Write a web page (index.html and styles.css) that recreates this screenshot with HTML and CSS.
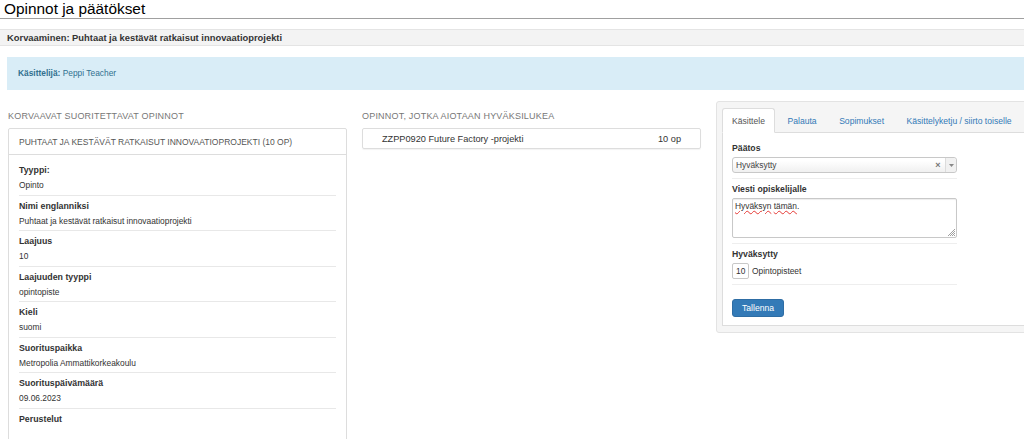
FILE: index.html
```html
<!DOCTYPE html>
<html lang="fi">
<head>
<meta charset="utf-8">
<title>Opinnot ja päätökset</title>
<link rel="stylesheet" href="styles.css">
</head>
<body>
<h1 class="page-title">Opinnot ja päätökset</h1>
<div class="subbar">Korvaaminen: Puhtaat ja kestävät ratkaisut innovaatioprojekti</div>
<div class="info"><b>Käsittelijä:</b> Peppi Teacher</div>

<div class="columns">
  <section class="col">
    <h2 class="section-title">Korvaavat suoritettavat opinnot</h2>
    <div class="card">
      <div class="card-head">PUHTAAT JA KESTÄVÄT RATKAISUT INNOVAATIOPROJEKTI (10 OP)</div>
      <div class="card-body">
        <div class="row"><div class="lbl">Tyyppi:</div><div class="val">Opinto</div></div>
        <div class="row"><div class="lbl">Nimi englanniksi</div><div class="val">Puhtaat ja kestävät ratkaisut innovaatioprojekti</div></div>
        <div class="row"><div class="lbl">Laajuus</div><div class="val">10</div></div>
        <div class="row"><div class="lbl">Laajuuden tyyppi</div><div class="val">opintopiste</div></div>
        <div class="row"><div class="lbl">Kieli</div><div class="val">suomi</div></div>
        <div class="row"><div class="lbl">Suorituspaikka</div><div class="val">Metropolia Ammattikorkeakoulu</div></div>
        <div class="row"><div class="lbl">Suorituspäivämäärä</div><div class="val">09.06.2023</div></div>
        <div class="row last"><div class="lbl">Perustelut</div><div class="val empty"></div></div>
      </div>
    </div>
  </section>

  <section class="col">
    <h2 class="section-title">Opinnot, jotka aiotaan hyväksilukea</h2>
    <div class="study">
      <span>ZZPP0920 Future Factory -projekti</span>
      <span>10 op</span>
    </div>
  </section>

  <section class="col">
    <div class="panel">
      <ul class="tabs">
        <li class="tab active">Käsittele</li>
        <li class="tab">Palauta</li>
        <li class="tab">Sopimukset</li>
        <li class="tab">Käsittelyketju / siirto toiselle</li>
      </ul>
      <div class="tab-content">
        <div class="group">
          <div class="flabel">Päätos</div>
          <div class="select">
            <span class="select-text">Hyväksytty</span>
            <span class="select-clear">×</span>
            <span class="select-arrow"><svg width="5" height="3" viewBox="0 0 5 3"><path d="M0 0H5L2.5 3Z" fill="#888"/></svg></span>
          </div>
        </div>
        <div class="group">
          <div class="flabel">Viesti opiskelijalle</div>
          <div class="textarea"><span class="spell">Hyväksyn</span> <span class="spell">tämän</span>.
            <svg class="grip" width="8" height="8" viewBox="0 0 8 8"><path d="M8 1L1 8M8 3L3 8M8 5L5 8M8 7L7 8" stroke="#888" stroke-width="0.8"/></svg>
          </div>
        </div>
        <div class="group">
          <div class="flabel">Hyväksytty</div>
          <div class="credits"><span class="num-input">10</span><span>Opintopisteet</span></div>
        </div>
        <button class="btn">Tallenna</button>
      </div>
    </div>
  </section>
</div>
</body>
</html>
```

FILE: styles.css
```css
html, body {
  margin: 0;
  padding: 0;
  overflow: hidden;
  background: #fff;
}
body {
  font-family: "Liberation Sans", Arial, sans-serif;
  font-size: 8.4px;
  line-height: 12px;
  color: #333;
  width: 1024px;
  height: 439px;
}
.page-title {
  margin: 0;
  padding: 0 0 1px 4px;
  font-size: 15.4px;
  font-weight: normal;
  line-height: 17px;
  color: #000;
  border-bottom: 1px solid #a0a0a0;
}
.subbar {
  margin-top: 10px;
  background: #f3f3f3;
  border-top: 1px solid #e4e4e4;
  border-bottom: 1px solid #e4e4e4;
  padding-left: 7px;
  font-size: 9.4px;
  font-weight: bold;
  line-height: 15px;
  color: #333;
  white-space: nowrap;
}
.info {
  margin: 11px 0 0 7px;
  height: 33px;
  line-height: 33px;
  padding-left: 11px;
  background: #d9edf7;
  color: #31708f;
}
.info b { font-weight: bold; }
.columns {
  display: flex;
  gap: 15px;
  margin: 11px 0 0 8px;
  width: 1100px;
}
.col {
  flex: 0 0 339px;
}
.section-title {
  margin: 9px 0 6px;
  font-size: 9px;
  font-weight: normal;
  line-height: 12px;
  letter-spacing: 0.2px;
  text-transform: uppercase;
  color: #777;
  white-space: nowrap;
}
.card {
  border: 1px solid #dddddd;
  border-radius: 2px;
  height: 400px;
}
.card-head {
  padding: 6.5px 10px;
  border-bottom: 1px solid #dddddd;
  font-size: 8.5px;
  color: #555;
  white-space: nowrap;
}
.card-body {
  padding: 5px 10px 0;
}
.row {
  padding: 4px 0 3.5px;
  border-bottom: 1px solid #e8e8e8;
}
.row.last { border-bottom: none; }
.lbl {
  font-size: 8.8px;
  font-weight: bold;
  color: #333;
}
.val {
  margin-top: 3px;
  color: #333;
  min-height: 12px;
}
.study {
  display: flex;
  justify-content: space-between;
  border: 1px solid #dddddd;
  border-radius: 2px;
  box-shadow: 0 1px 1px rgba(0,0,0,0.05);
  padding: 3.5px 19px;
  font-size: 9.2px;
  color: #333;
}
.panel {
  background: #f5f5f5;
  border: 1px solid #e3e3e3;
  border-radius: 3px;
  padding: 6px 0 6px 5px;
}
.tabs {
  display: flex;
  list-style: none;
  margin: 0;
  padding: 0;
  border-bottom: 1px solid #dddddd;
  white-space: nowrap;
  font-size: 8.6px;
}
.tab {
  padding: 5.5px 9px;
  margin-right: 2.5px;
  margin-bottom: -1px;
  border: 1px solid transparent;
  border-radius: 3px 3px 0 0;
  color: #337ab7;
}
.tab.active {
  background: #fff;
  border-color: #dddddd #dddddd transparent;
  color: #555;
}
.tab-content {
  background: #fff;
  border: 1px solid #dddddd;
  border-top: none;
  padding: 9px 9px 8px;
}
.group {
  width: 225px;
  padding-bottom: 5px;
  border-bottom: 1px solid #eeeeee;
  margin-bottom: 4px;
}
.group + .btn { margin-top: 14px; }
.flabel {
  font-size: 8.7px;
  font-weight: bold;
  color: #333;
  margin-bottom: 3px;
}
.select {
  display: flex;
  align-items: center;
  border: 1px solid #c8c8c8;
  border-radius: 3px;
  background: linear-gradient(#ffffff 20%, #f0f0f0 100%);
  box-sizing: border-box;
  height: 16px;
}
.select-text {
  flex: 1;
  padding-left: 3px;
  color: #444;
}
.select-clear {
  width: 10px;
  font-size: 9px;
  font-weight: bold;
  color: #777;
  text-align: center;
}
.select-arrow {
  display: flex;
  align-items: center;
  justify-content: center;
  width: 10px;
  height: 100%;
  margin-left: 2px;
  border-left: 1px solid #dcdcdc;
  background: #f1f1f1;
  border-radius: 0 3px 3px 0;
}
.textarea {
  position: relative;
  height: 40px;
  box-sizing: border-box;
  border: 1px solid #c8c8c8;
  border-radius: 2px;
  box-shadow: inset 0 1px 1px rgba(0,0,0,0.075);
  padding: 1px 2px;
  color: #333;
}
.spell {
  text-decoration: underline wavy #e53935;
  text-decoration-thickness: 0.8px;
  text-underline-offset: 1px;
}
.grip {
  position: absolute;
  right: 1px;
  bottom: 1px;
}
.credits {
  display: flex;
  align-items: center;
  gap: 3px;
}
.num-input {
  display: inline-flex;
  align-items: center;
  box-sizing: border-box;
  width: 17px;
  height: 16px;
  padding-left: 3px;
  border: 1px solid #c8c8c8;
  border-radius: 2px;
}
.btn {
  display: block;
  height: 18px;
  padding: 0 9px;
  border: 1px solid #2e6da4;
  border-radius: 3px;
  background: #337ab7;
  color: #fff;
  font-family: inherit;
  font-size: 8.6px;
  line-height: 16px;
}
```
